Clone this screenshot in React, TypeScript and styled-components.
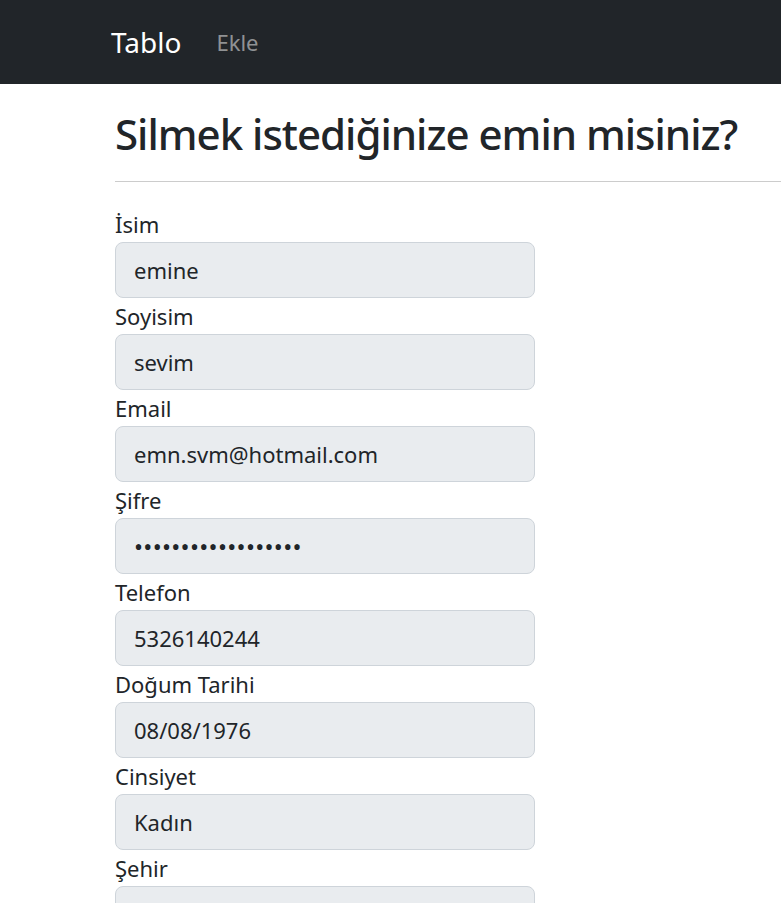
import React from "react";
import styled, { createGlobalStyle } from "styled-components";

interface FieldProps {
  label: string;
  value: string;
  type?: string;
}

const GlobalStyle = createGlobalStyle`
  html, body {
    margin: 0;
    padding: 0;
    background: #fff;
  }
  body {
    font-family: "Noto Sans", "Open Sans", sans-serif;
    color: #212529;
    overflow: hidden;
  }
`;

const NavBar = styled.nav`
  display: flex;
  align-items: center;
  height: 84px;
  padding-left: 111px;
  background-color: #212529;
`;

const Brand = styled.a`
  font-size: 28px;
  color: #fff;
  text-decoration: none;
  margin-right: 35px;
`;

const NavLink = styled.a`
  font-size: 22px;
  color: rgba(255, 255, 255, 0.5);
  text-decoration: none;
`;

const Main = styled.main`
  padding-left: 115px;
`;

const Title = styled.h1`
  margin: 0;
  padding-top: 23px;
  font-size: 42px;
  font-weight: 500;
  line-height: 54px;
  letter-spacing: -1px;
  white-space: nowrap;
`;

const Divider = styled.hr`
  margin: 20px 0 24px;
  border: 0;
  border-top: 1px solid rgba(0, 0, 0, 0.2);
`;

const Form = styled.form`
  display: flex;
  flex-direction: column;
  width: 420px;
`;

const Label = styled.label`
  display: block;
  font-size: 22px;
  line-height: 36px;
`;

const Input = styled.input<{ $secret?: boolean }>`
  box-sizing: border-box;
  width: 100%;
  height: 56px;
  padding: 0 18px;
  font-family: inherit;
  font-size: ${(p) => (p.$secret ? "24px" : "22px")};
  letter-spacing: ${(p) => (p.$secret ? "0.3px" : "normal")};
  color: #212529;
  background-color: #e9ecef;
  border: 1px solid #ced4da;
  border-radius: 8px;
  outline: none;
`;

const fields: FieldProps[] = [
  { label: "İsim", value: "emine" },
  { label: "Soyisim", value: "sevim" },
  { label: "Email", value: "emn.svm@hotmail.com" },
  { label: "Şifre", value: "emine1234567890123", type: "password" },
  { label: "Telefon", value: "5326140244" },
  { label: "Doğum Tarihi", value: "08/08/1976" },
  { label: "Cinsiyet", value: "Kadın" },
  { label: "Şehir", value: "Ankara" },
];

const Field: React.FC<FieldProps> = ({ label, value, type }) => (
  <div>
    <Label>{label}</Label>
    <Input
      type={type || "text"}
      value={value}
      $secret={type === "password"}
      readOnly
    />
  </div>
);

const App: React.FC = () => {
  return (
    <>
      <GlobalStyle />
      <NavBar>
        <Brand href="#">Tablo</Brand>
        <NavLink href="#">Ekle</NavLink>
      </NavBar>
      <Main>
        <Title>Silmek istediğinize emin misiniz?</Title>
        <Divider />
        <Form>
          {fields.map((f) => (
            <Field key={f.label} {...f} />
          ))}
        </Form>
      </Main>
    </>
  );
};

export default App;
